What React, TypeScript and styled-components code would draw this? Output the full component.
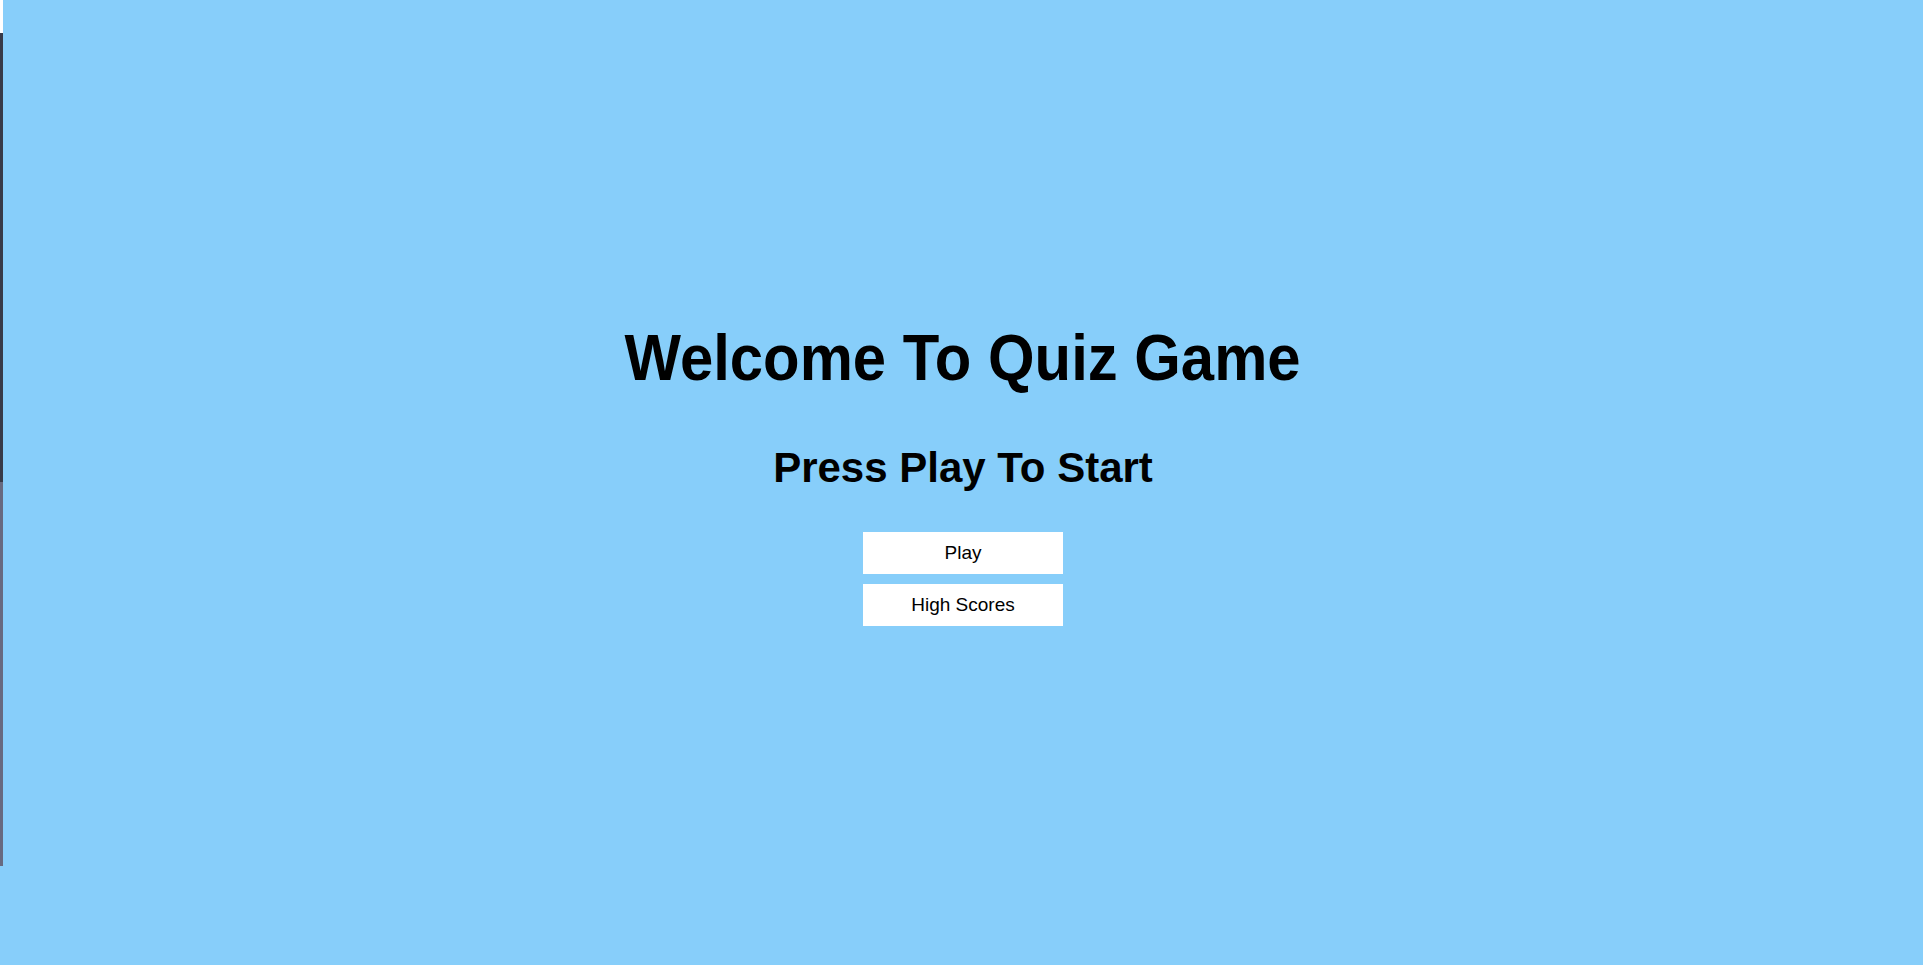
import React from "react";
import styled, { createGlobalStyle } from "styled-components";

const GlobalStyle = createGlobalStyle`
  html, body {
    margin: 0;
    padding: 0;
    background: #ffffff;
  }
  body {
    font-family: "Liberation Sans", Arial, sans-serif;
  }
`;

const Page = styled.div`
  display: flex;
  flex-direction: row;
  width: 100%;
  height: 965px;
  overflow: hidden;
`;

const Edge = styled.div`
  width: 3px;
  flex: 0 0 3px;
  display: flex;
  flex-direction: column;
`;

const EdgePart = styled.div<{ $h?: number; $bg: string }>`
  background: ${(p) => p.$bg};
  ${(p) => (p.$h ? `height: ${p.$h}px; flex: 0 0 ${p.$h}px;` : "flex: 1;")}
`;

const Main = styled.main`
  flex: 1;
  background: #87cefa;
  display: flex;
  flex-direction: column;
  align-items: center;
  padding-top: 322px;
  box-sizing: border-box;
`;

const Title = styled.h1`
  margin: 0;
  font-family: "Liberation Sans", Arial, sans-serif;
  font-weight: 700;
  font-size: 64px;
  line-height: 1.15;
  color: #000;
  transform: scaleX(0.935);
  white-space: nowrap;
`;

const Subtitle = styled.h2`
  margin: 48px 0 0;
  font-family: "Liberation Sans", Arial, sans-serif;
  font-weight: 700;
  font-size: 42px;
  line-height: 1.15;
  color: #000;
  white-space: nowrap;
`;

const Menu = styled.div`
  margin-top: 40px;
  display: flex;
  flex-direction: column;
  gap: 10px;
`;

const MenuButton = styled.button`
  width: 200px;
  height: 42px;
  border: none;
  background: #ffffff;
  color: #000;
  font-family: "Liberation Sans", Arial, sans-serif;
  font-size: 19px;
  padding: 0;
  cursor: pointer;
`;

export default function App() {
  return (
    <>
      <GlobalStyle />
      <Page>
        <Edge>
          <EdgePart $h={33} $bg="#ffffff" />
          <EdgePart $h={449} $bg="#383b48" />
          <EdgePart $h={384} $bg="#676a80" />
          <EdgePart $bg="#87cefa" />
        </Edge>
        <Main>
          <Title>Welcome To Quiz Game</Title>
          <Subtitle>Press Play To Start</Subtitle>
          <Menu>
            <MenuButton>Play</MenuButton>
            <MenuButton>High Scores</MenuButton>
          </Menu>
        </Main>
      </Page>
    </>
  );
}
